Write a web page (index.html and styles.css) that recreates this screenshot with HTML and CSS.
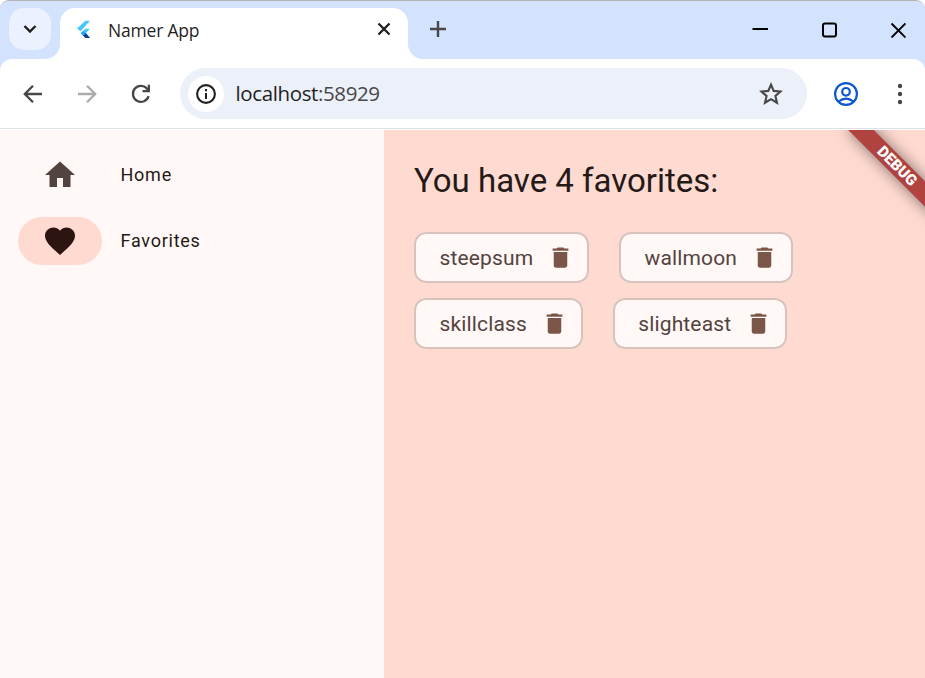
FILE: index.html
```html
<!DOCTYPE html>
<html lang="en">
<head>
<meta charset="utf-8">
<title>Namer App</title>
<link rel="stylesheet" href="styles.css">
</head>
<body>
<div class="window">
  <header class="tabstrip">
    <button class="tab-search" aria-label="Search tabs"><svg width="42" height="42" viewBox="0 0 42 42"><path d="M15.500 18l5.500 5.500 5.500-5.500" fill="none" stroke="#1f1f1f" stroke-width="2.400"/></svg></button>
    <div class="tab">
      <svg class="tab-logo" width="18" height="20" viewBox="0 0 18 20"><path d="M9.500.800H14L4.500 11.300 1 8.500z" fill="#42c8fb"/><path d="M9.500 8.800H14l-4.200 4.300 4.200 5h-4.500L4.700 13.200z" fill="#42c8fb"/><path d="M7 15.500l2.700-2.500L14 18.100H9.500z" fill="#0b3b91"/><path d="M4.700 13.200l2.500-2.400 2.600 2.300L7 15.500z" fill="#22a7f0"/></svg>
      <span class="tab-title">Namer App</span>
      <svg class="tab-close" width="14" height="14" viewBox="0 0 14 14"><path d="M1.500 1.500l11 11M12.500 1.500l-11 11" stroke="#1f1f1f" stroke-width="2.300"/></svg>
    </div>
    <svg class="new-tab" width="16" height="16" viewBox="0 0 16 16"><path d="M8 0v16M0 8h16" stroke="#474747" stroke-width="2.400"/></svg>
    <div class="controls">
      <svg width="16" height="16" viewBox="0 0 16 16"><path d="M.500 7H16" stroke="#000" stroke-width="2"/></svg>
      <svg width="16" height="16" viewBox="0 0 16 16"><rect x="2" y="1.500" width="13" height="13" rx="2" fill="none" stroke="#000" stroke-width="2"/></svg>
      <svg width="16" height="16" viewBox="0 0 16 16"><path d="M1.500 1.500l14 14M15.500 1.500l-14 14" stroke="#000" stroke-width="1.900"/></svg>
    </div>
  </header>
  <div class="toolbar">
    <svg class="nav" width="20" height="20" viewBox="0 0 20 20"><path d="M19 10H2M10 1.700L1.800 10l8.200 8.300" fill="none" stroke="#474747" stroke-width="2.300"/></svg>
    <svg class="nav" width="20" height="20" viewBox="0 0 20 20"><path d="M1 10h17M10 1.700l8.200 8.300-8.200 8.300" fill="none" stroke="#ababab" stroke-width="2.300"/></svg>
    <svg class="nav" width="20" height="20" viewBox="0 0 20 20"><path d="M17.600 12.200A8 8 0 1 1 15.800 4.400L18 6.600" fill="none" stroke="#474747" stroke-width="2.300"/><path d="M11.500 8.200H19V.800h-2.300V6h-5.200z" fill="#474747"/></svg>
    <div class="omnibox">
      <span class="site-info"><svg width="20" height="20" viewBox="0 0 20 20"><circle cx="10" cy="10" r="8.900" fill="none" stroke="#1f1f1f" stroke-width="2.100"/><path d="M10 9v6M10 5v2.200" stroke="#1f1f1f" stroke-width="2"/></svg></span>
      <span class="url">localhost<span class="port">:58929</span></span>
      <svg class="star" width="24" height="24" viewBox="0 0 24 24"><path d="M12 2.600l2.700 6.300 6.900.600-5.200 4.500 1.600 6.700L12 17.100l-6 3.600 1.600-6.700-5.200-4.500 6.900-.600z" fill="none" stroke="#474747" stroke-width="2.100"/></svg>
    </div>
    <svg class="profile" width="24" height="24" viewBox="0 0 24 24"><g fill="none" stroke="#0b57d0" stroke-width="2.200"><circle cx="12" cy="12" r="10.900"/><circle cx="12" cy="9.800" r="3.800"/><path d="M4.600 19.500c4.600-3.700 10.200-3.700 14.800 0"/></g></svg>
    <svg class="menu" width="6" height="22" viewBox="0 0 6 22"><g fill="#474747"><circle cx="3" cy="3" r="2.200"/><circle cx="3" cy="11" r="2.200"/><circle cx="3" cy="19" r="2.200"/></g></svg>
  </div>
  <main class="app">
    <nav class="rail">
      <a class="destination"><span class="indicator"><svg width="36" height="36" viewBox="0 0 24 24" fill="#53433f"><path d="M10 20v-6h4v6h5v-8h3L12 3 2 12h3v8z"/></svg></span><span class="label">Home</span></a>
      <a class="destination"><span class="indicator selected"><svg width="36" height="36" viewBox="0 0 24 24" fill="#2c1510"><path d="M12 21.350l-1.450-1.320C5.400 15.360 2 12.280 2 8.500 2 5.420 4.420 3 7.500 3c1.740 0 3.410.810 4.500 2.090C13.090 3.810 14.760 3 16.500 3 19.580 3 22 5.420 22 8.500c0 3.780-3.400 6.860-8.550 11.540L12 21.350z"/></svg></span><span class="label">Favorites</span></a>
    </nav>
    <section class="content">
      <h1>You have 4 favorites:</h1>
      <div class="row">
        <div class="chip">steepsum<svg width="27" height="27" viewBox="0 0 24 24"><path d="M6 19c0 1.100.900 2 2 2h8c1.100 0 2-.900 2-2V7H6v12zM19 4h-3.500l-1-1h-5l-1 1H5v2h14V4z"/></svg></div>
        <div class="chip">wallmoon<svg width="27" height="27" viewBox="0 0 24 24"><path d="M6 19c0 1.100.900 2 2 2h8c1.100 0 2-.900 2-2V7H6v12zM19 4h-3.500l-1-1h-5l-1 1H5v2h14V4z"/></svg></div>
      </div>
      <div class="row">
        <div class="chip">skillclass<svg width="27" height="27" viewBox="0 0 24 24"><path d="M6 19c0 1.100.900 2 2 2h8c1.100 0 2-.900 2-2V7H6v12zM19 4h-3.500l-1-1h-5l-1 1H5v2h14V4z"/></svg></div>
        <div class="chip">slighteast<svg width="27" height="27" viewBox="0 0 24 24"><path d="M6 19c0 1.100.900 2 2 2h8c1.100 0 2-.900 2-2V7H6v12zM19 4h-3.500l-1-1h-5l-1 1H5v2h14V4z"/></svg></div>
      </div>
      <div class="banner">DEBUG</div>
    </section>
  </main>
</div>
</body>
</html>
```
FILE: styles.css
```css
* { box-sizing: border-box; }
body { margin: 0; background: #fff; }
svg { display: block; flex: none; }
.window {
  width: 925px;
  height: 678px;
  display: flex;
  flex-direction: column;
  overflow: hidden;
  border-top: 1px solid #b4b4b4;
  border-radius: 9px 9px 0 0;
  background: #d3e2fd;
}
.tabstrip { height: 58px; flex: none; display: flex; align-items: flex-start; padding-left: 9px; }
.tab-search { width: 42px; height: 42px; margin-top: 7px; padding: 0; border: 0; border-radius: 15px; background: #ebf1fe; }
.tab {
  position: relative;
  width: 348px;
  height: 51px;
  margin: 7px 0 0 9px;
  padding: 0 17px 7px 16px;
  display: flex;
  align-items: center;
  border-radius: 15px 15px 0 0;
  background: #fff;
}
.tab::before, .tab::after { content: ""; position: absolute; bottom: 0; width: 15px; height: 15px; }
.tab::before { right: 100%; background: radial-gradient(circle at 0 0, transparent 14.500px, #fff 15.500px); }
.tab::after { left: 100%; background: radial-gradient(circle at 100% 0, transparent 14.500px, #fff 15.500px); }
.tab-title { margin-left: 14px; font: 17.500px/24px "Open Sans", sans-serif; letter-spacing: -.2px; color: #1f1f1f; white-space: nowrap; }
.tab-close { margin-left: auto; margin-top: -2px; }
.new-tab { margin: 20px 0 0 22px; }
.controls { display: flex; gap: 53px; margin: 21px 19px 0 auto; }
.toolbar {
  height: 70px;
  flex: none;
  display: flex;
  align-items: center;
  padding: 0 22px 0 23px;
  border-radius: 12px 12px 0 0;
  border-bottom: 1px solid #dfe1e4;
  background: #fff;
}
.nav { margin-right: 34px; }
.nav + .nav + .nav { margin-right: 29px; }
.omnibox { width: 627px; height: 51px; display: flex; align-items: center; padding: 0 24px 0 8px; border-radius: 26px; background: #ecf0f9; }
.site-info { width: 36px; height: 36px; display: grid; place-items: center; border-radius: 50%; background: #fff; }
.url { margin-left: 11.500px; padding-bottom: 2px; font: 20.500px/28px "Open Sans", sans-serif; letter-spacing: -.38px; color: #1f1f1f; white-space: nowrap; }
.port { color: #474747; }
.star { margin-left: auto; }
.profile { margin-left: 27px; }
.menu { margin-left: auto; }
.app { flex: 1; display: flex; padding-top: 1px; background: #fff; font-family: Roboto, sans-serif; }
.rail { width: 384px; padding: 21px 18px; display: flex; flex-direction: column; gap: 18px; background: #fff8f6; }
.destination { height: 48px; display: flex; align-items: center; gap: 18.500px; font-size: 18px; letter-spacing: .75px; color: #231917; }
.label { padding-bottom: 2px; }
.indicator { width: 84px; height: 48px; display: grid; place-items: center; border-radius: 24px; }
.selected { background: #ffdad1; }
.content { position: relative; overflow: hidden; flex: 1; padding: 30px; background: #ffdad1; }
h1 { margin: 0 0 30px; font-size: 33px; line-height: 42px; font-weight: 400; color: #231917; white-space: nowrap; }
.row { display: flex; gap: 30px; margin-bottom: 15px; }
.chip {
  height: 51px;
  display: flex;
  align-items: center;
  gap: 13.700px;
  padding: 0 15px 0 25.500px;
  box-shadow: inset 0 0 0 2px #d8c2bc;
  border-radius: 12px;
  background: #fff8f6;
  font-size: 21px;
  letter-spacing: .15px;
  color: #53433f;
}
.chip svg { fill: #7a5548; }
.banner {
  position: absolute;
  top: 27px;
  right: -31.500px;
  width: 120px;
  height: 18px;
  transform: rotate(45deg);
  background: #b04340;
  box-shadow: 0 0 15px rgba(0, 0, 0, .5);
  color: #fff;
  font-size: 15.300px;
  line-height: 18px;
  font-weight: 900;
  text-align: center;
}
```
